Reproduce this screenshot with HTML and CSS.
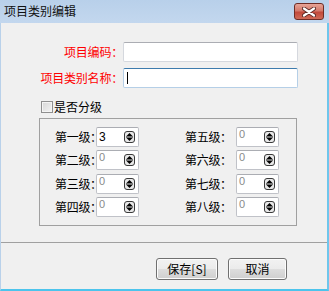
FILE: index.html
```html
<!DOCTYPE html>
<html lang="zh-CN">
<head>
<meta charset="utf-8">
<title>项目类别编辑</title>
<link rel="stylesheet" href="styles.css">
</head>
<body>
<div class="window">
  <div class="titlebar">
    <span class="title">项目类别编辑</span>
    <span class="close">
      <svg width="14" height="10" viewBox="0 0 14 10">
        <path d="M2 1.5 L12 8.5 M12 1.5 L2 8.5" stroke="#5a2a25" stroke-width="4" stroke-linecap="round"/>
        <path d="M2 1.5 L12 8.5 M12 1.5 L2 8.5" stroke="#ffffff" stroke-width="2.2" stroke-linecap="round"/>
      </svg>
    </span>
  </div>
  <div class="client">
    <div class="fields">
      <label class="flabel">项目编码：</label>
      <div class="input"></div>
      <label class="flabel">项目类别名称：</label>
      <div class="input focused"><span class="caret"></span></div>
    </div>
    <div class="checkrow">
      <span class="checkbox"></span>
      <span class="checktext">是否分级</span>
    </div>
    <div class="group">
      <span class="slabel">第一级：</span><div class="spin"><span class="val">3</span><svg class="arrows" width="11" height="12" viewBox="0 0 11 12"><rect x="0.5" y="0.5" width="10" height="11" rx="2.5" fill="#e8e8e8" stroke="#3a3a3a"/><path d="M5.5 2 L8.5 5 L2.5 5 Z" fill="#000"/><path d="M2 6 H9" stroke="#000"/><path d="M2.5 7 L8.5 7 L5.5 10 Z" fill="#000"/></svg></div>
      <span class="gapcol"></span>
      <span class="slabel">第五级：</span><div class="spin"><span class="val zero">0</span><svg class="arrows" width="11" height="12" viewBox="0 0 11 12"><rect x="0.5" y="0.5" width="10" height="11" rx="2.5" fill="#e8e8e8" stroke="#3a3a3a"/><path d="M5.5 2 L8.5 5 L2.5 5 Z" fill="#000"/><path d="M2 6 H9" stroke="#000"/><path d="M2.5 7 L8.5 7 L5.5 10 Z" fill="#000"/></svg></div>

      <span class="slabel">第二级：</span><div class="spin"><span class="val zero">0</span><svg class="arrows" width="11" height="12" viewBox="0 0 11 12"><rect x="0.5" y="0.5" width="10" height="11" rx="2.5" fill="#e8e8e8" stroke="#3a3a3a"/><path d="M5.5 2 L8.5 5 L2.5 5 Z" fill="#000"/><path d="M2 6 H9" stroke="#000"/><path d="M2.5 7 L8.5 7 L5.5 10 Z" fill="#000"/></svg></div>
      <span class="gapcol"></span>
      <span class="slabel">第六级：</span><div class="spin"><span class="val zero">0</span><svg class="arrows" width="11" height="12" viewBox="0 0 11 12"><rect x="0.5" y="0.5" width="10" height="11" rx="2.5" fill="#e8e8e8" stroke="#3a3a3a"/><path d="M5.5 2 L8.5 5 L2.5 5 Z" fill="#000"/><path d="M2 6 H9" stroke="#000"/><path d="M2.5 7 L8.5 7 L5.5 10 Z" fill="#000"/></svg></div>

      <span class="slabel">第三级：</span><div class="spin"><span class="val zero">0</span><svg class="arrows" width="11" height="12" viewBox="0 0 11 12"><rect x="0.5" y="0.5" width="10" height="11" rx="2.5" fill="#e8e8e8" stroke="#3a3a3a"/><path d="M5.5 2 L8.5 5 L2.5 5 Z" fill="#000"/><path d="M2 6 H9" stroke="#000"/><path d="M2.5 7 L8.5 7 L5.5 10 Z" fill="#000"/></svg></div>
      <span class="gapcol"></span>
      <span class="slabel">第七级：</span><div class="spin"><span class="val zero">0</span><svg class="arrows" width="11" height="12" viewBox="0 0 11 12"><rect x="0.5" y="0.5" width="10" height="11" rx="2.5" fill="#e8e8e8" stroke="#3a3a3a"/><path d="M5.5 2 L8.5 5 L2.5 5 Z" fill="#000"/><path d="M2 6 H9" stroke="#000"/><path d="M2.5 7 L8.5 7 L5.5 10 Z" fill="#000"/></svg></div>

      <span class="slabel">第四级：</span><div class="spin"><span class="val zero">0</span><svg class="arrows" width="11" height="12" viewBox="0 0 11 12"><rect x="0.5" y="0.5" width="10" height="11" rx="2.5" fill="#e8e8e8" stroke="#3a3a3a"/><path d="M5.5 2 L8.5 5 L2.5 5 Z" fill="#000"/><path d="M2 6 H9" stroke="#000"/><path d="M2.5 7 L8.5 7 L5.5 10 Z" fill="#000"/></svg></div>
      <span class="gapcol"></span>
      <span class="slabel">第八级：</span><div class="spin"><span class="val zero">0</span><svg class="arrows" width="11" height="12" viewBox="0 0 11 12"><rect x="0.5" y="0.5" width="10" height="11" rx="2.5" fill="#e8e8e8" stroke="#3a3a3a"/><path d="M5.5 2 L8.5 5 L2.5 5 Z" fill="#000"/><path d="M2 6 H9" stroke="#000"/><path d="M2.5 7 L8.5 7 L5.5 10 Z" fill="#000"/></svg></div>
    </div>
    <div class="separator"></div>
    <div class="buttons">
      <button class="btn btn-save">保存[S]</button>
      <button class="btn btn-cancel">取消</button>
    </div>
  </div>
</div>
</body>
</html>
```

FILE: styles.css
```css
html, body {
  margin: 0;
  padding: 0;
  background: #ffffff;
}
body {
  font-family: "Noto Sans CJK SC", "Liberation Sans", sans-serif;
  font-size: 12px;
  color: #000;
}
.window {
  width: 329px;
  height: 291px;
  display: flex;
  flex-direction: column;
  overflow: hidden;
}
.titlebar {
  height: 23px;
  flex: 0 0 23px;
  display: flex;
  align-items: flex-start;
  background: linear-gradient(#b8d0ea, #c3d7ee);
  box-sizing: border-box;
}
.title {
  margin: 4px 0 0 4px;
  font-size: 12px;
  line-height: 14px;
  color: #111;
}
.close {
  margin: 3px 5px 0 auto;
  width: 30px;
  height: 17px;
  box-sizing: border-box;
  border: 1px solid #6e2d26;
  border-radius: 3px;
  background: linear-gradient(#e7a497 0%, #d47a6c 45%, #c24a3c 55%, #cf6a57 100%);
  display: flex;
  align-items: center;
  justify-content: center;
}
.close svg { display: block; }
.client {
  flex: 1;
  background: #f0f0f0;
  border-left: 1px solid #b9d1ea;
  border-right: 2px solid #6fc6ec;
  border-bottom: 2px solid #4cc4ec;
  display: flex;
  flex-direction: column;
}
.fields {
  margin-top: 19px;
  display: grid;
  grid-template-columns: 122px 175px;
  grid-auto-rows: 20px;
  row-gap: 6px;
  align-items: center;
}
.flabel {
  color: #ff0000;
  text-align: right;
  font-size: 12px;
  line-height: 14px;
  white-space: nowrap;
  letter-spacing: -0.2px;
}
.input {
  height: 20px;
  box-sizing: border-box;
  background: #fff;
  border: 1px solid #d5d8de;
  border-top-color: #abadb3;
  border-radius: 2px;
  position: relative;
}
.input.focused {
  border-color: #b5cfe7;
  border-top-color: #3d7bad;
}
.caret {
  position: absolute;
  left: 3px;
  top: 3px;
  width: 1px;
  height: 12px;
  background: #000;
}
.checkrow {
  margin-top: 12px;
  margin-left: 40px;
  height: 14px;
  display: flex;
  align-items: center;
}
.checkbox {
  width: 12px;
  height: 12px;
  box-sizing: border-box;
  border: 1px solid #8f8f8f;
  background: linear-gradient(135deg, #d6d6d6, #f4f4f4);
  box-shadow: inset 0 0 0 1px #f4f4f4;
}
.checktext {
  margin-left: 1px;
  line-height: 14px;
}
.group {
  margin-top: 4px;
  margin-left: 38px;
  width: 258px;
  height: 108px;
  box-sizing: border-box;
  border: 1px solid #a0a0a0;
  padding: 8px 0 0 15px;
  display: grid;
  grid-template-columns: 41px 43px 46px 51px 43px;
  grid-template-rows: repeat(4, 20px);
  row-gap: 3.33px;
  align-items: center;
}
.slabel {
  white-space: nowrap;
  line-height: 14px;
  font-size: 12px;
  font-feature-settings: "halt" 1;
  letter-spacing: -0.3px;
}
.spin {
  height: 20px;
  box-sizing: border-box;
  background: #fff;
  border: 1px solid #c0c2c8;
  border-top-color: #abadb3;
  border-radius: 2px;
  display: flex;
  align-items: center;
  padding-left: 2px;
  padding-right: 3px;
}
.val {
  flex: 1;
  font-family: "Liberation Sans", sans-serif;
  font-size: 12px;
  line-height: 14px;
  color: #000;
}
.val.zero {
  color: #8a8a8a;
  font-size: 11px;
  align-self: flex-start;
  line-height: 12px;
}
.arrows { display: block; }
.separator {
  margin-top: 16px;
  height: 1px;
  background: #a0a0a0;
}
.buttons {
  margin-top: 15px;
  display: flex;
  justify-content: flex-end;
  gap: 10px;
  padding-right: 40px;
}
.btn {
  height: 22px;
  box-sizing: border-box;
  border: 1px solid #707070;
  border-radius: 3px;
  background: linear-gradient(#f2f2f2 0%, #ebebeb 50%, #dddddd 51%, #cfcfcf 100%);
  box-shadow: inset 0 0 0 1px #fcfcfc;
  font-family: "Noto Sans CJK SC", "Liberation Sans", sans-serif;
  font-size: 12px;
  line-height: 14px;
  color: #000;
  padding: 0;
}
.btn-save { width: 62px; }
.btn-cancel { width: 59px; }
```
